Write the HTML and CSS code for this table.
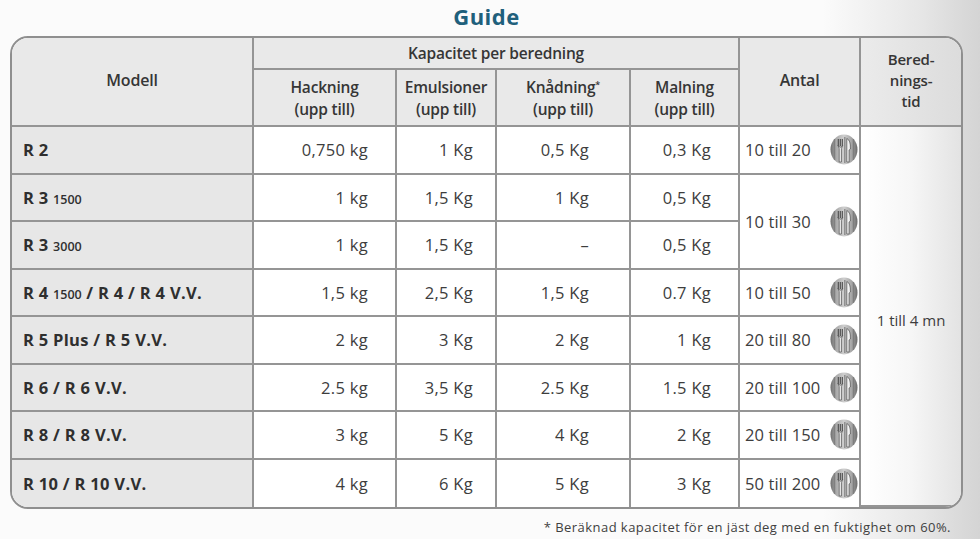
FILE: index.html
```html
<!DOCTYPE html>
<html lang="sv">
<head>
<meta charset="utf-8">
<title>Guide</title>
<link rel="stylesheet" href="styles.css">
</head>
<body>
<svg width="0" height="0" class="defs" aria-hidden="true">
  <defs>
    <linearGradient id="plate" x1="0" x2="1" y1="0" y2="0">
      <stop offset="0" stop-color="#6f6f6f"/>
      <stop offset="0.2" stop-color="#a9a9a9"/>
      <stop offset="0.5" stop-color="#cfcfcf"/>
      <stop offset="0.8" stop-color="#a3a3a3"/>
      <stop offset="1" stop-color="#6c6c6c"/>
    </linearGradient>
    <symbol id="cutlery" viewBox="0 0 28 31">
      <ellipse cx="14" cy="15.5" rx="13.5" ry="15" fill="url(#plate)"/>
      <path d="M4.5 5 V26 M23.5 5 V26 M14.8 3 V29" stroke="#777" stroke-width="1.4" opacity="0.75"/>
      <path d="M8.3 5 V12 M10.3 5 V12 M12.3 5 V12" stroke="#4a4a4a" stroke-width="1.1"/>
      <path d="M8 11.5 Q10.3 15 12.6 11.5 L11.4 14.5 V28 H9.2 V14.5 Z" fill="#f3f3f3" stroke="#4a4a4a" stroke-width="0.7"/>
      <path d="M16.8 28 V4.5 Q20.8 6 20.4 15 L19.1 16 V28 Z" fill="#f3f3f3" stroke="#4a4a4a" stroke-width="0.7"/>
    </symbol>
  </defs>
</svg>
<div class="page">
  <h1 class="title">Guide</h1>
  <div class="frame">
    <table class="guide">
      <colgroup>
        <col class="c-model">
        <col class="c-hack">
        <col class="c-emul">
        <col class="c-knad">
        <col class="c-maln">
        <col class="c-antal">
        <col class="c-tid">
      </colgroup>
      <thead>
        <tr class="hrow1">
          <th rowspan="2" class="model-h">Modell</th>
          <th colspan="4">Kapacitet per beredning</th>
          <th rowspan="2" class="antal-h">Antal</th>
          <th rowspan="2" class="last tid-h">Bered-<br>nings-<br>tid</th>
        </tr>
        <tr class="hrow2">
          <th>Hackning<br>(upp till)</th>
          <th>Emulsioner<br>(upp till)</th>
          <th>Knådning<sup>*</sup><br>(upp till)</th>
          <th>Malning<br>(upp till)</th>
        </tr>
      </thead>
      <tbody>
        <tr>
          <td class="model">R 2</td>
          <td class="num hack">0,750 kg</td>
          <td class="num emul">1 Kg</td>
          <td class="num knad">0,5 Kg</td>
          <td class="num maln">0,3 Kg</td>
          <td class="antal"><div class="antal-in"><span>10 till 20</span><svg class="ico"><use href="#cutlery"/></svg></div></td>
          <td rowspan="8" class="last tid">1 till 4 mn</td>
        </tr>
        <tr>
          <td class="model">R 3 <small>1500</small></td>
          <td class="num hack">1 kg</td>
          <td class="num emul">1,5 Kg</td>
          <td class="num knad">1 Kg</td>
          <td class="num maln">0,5 Kg</td>
          <td rowspan="2" class="antal"><div class="antal-in"><span>10 till 30</span><svg class="ico"><use href="#cutlery"/></svg></div></td>
        </tr>
        <tr>
          <td class="model">R 3 <small>3000</small></td>
          <td class="num hack">1 kg</td>
          <td class="num emul">1,5 Kg</td>
          <td class="num knad">–</td>
          <td class="num maln">0,5 Kg</td>
        </tr>
        <tr>
          <td class="model">R 4 <small>1500</small> / R 4 / R 4 V.V.</td>
          <td class="num hack">1,5 kg</td>
          <td class="num emul">2,5 Kg</td>
          <td class="num knad">1,5 Kg</td>
          <td class="num maln">0.7 Kg</td>
          <td class="antal"><div class="antal-in"><span>10 till 50</span><svg class="ico"><use href="#cutlery"/></svg></div></td>
        </tr>
        <tr>
          <td class="model">R 5 Plus / R 5 V.V.</td>
          <td class="num hack">2 kg</td>
          <td class="num emul">3 Kg</td>
          <td class="num knad">2 Kg</td>
          <td class="num maln">1 Kg</td>
          <td class="antal"><div class="antal-in"><span>20 till 80</span><svg class="ico"><use href="#cutlery"/></svg></div></td>
        </tr>
        <tr>
          <td class="model">R 6 / R 6 V.V.</td>
          <td class="num hack">2.5 kg</td>
          <td class="num emul">3,5 Kg</td>
          <td class="num knad">2.5 Kg</td>
          <td class="num maln">1.5 Kg</td>
          <td class="antal"><div class="antal-in"><span>20 till 100</span><svg class="ico"><use href="#cutlery"/></svg></div></td>
        </tr>
        <tr>
          <td class="model">R 8 / R 8 V.V.</td>
          <td class="num hack">3 kg</td>
          <td class="num emul">5 Kg</td>
          <td class="num knad">4 Kg</td>
          <td class="num maln">2 Kg</td>
          <td class="antal"><div class="antal-in"><span>20 till 150</span><svg class="ico"><use href="#cutlery"/></svg></div></td>
        </tr>
        <tr class="lastrow">
          <td class="model">R 10 / R 10 V.V.</td>
          <td class="num hack">4 kg</td>
          <td class="num emul">6 Kg</td>
          <td class="num knad">5 Kg</td>
          <td class="num maln">3 Kg</td>
          <td class="antal"><div class="antal-in"><span>50 till 200</span><svg class="ico"><use href="#cutlery"/></svg></div></td>
        </tr>
      </tbody>
    </table>
  </div>
  <p class="note">* Beräknad kapacitet för en jäst deg med en fuktighet om 60%.</p>
</div>
</body>
</html>
```

FILE: styles.css
```css
html, body {
  margin: 0;
  padding: 0;
}
body {
  width: 980px;
  height: 539px;
  overflow: hidden;
  font-family: "Open Sans", "DejaVu Sans", sans-serif;
  color: #3a3a3a;
  background: linear-gradient(to right, #fbfbfb 0%, #fbfbfb 84%, #e6e6e6 94%, #d4d4d4 100%);
}
.defs {
  position: absolute;
  width: 0;
  height: 0;
}
.page {
  padding-left: 10px;
  width: 953px;
}
.title {
  margin: 0;
  height: 36px;
  line-height: 32px;
  text-align: center;
  font-size: 22px;
  font-weight: 700;
  color: #1f607c;
  letter-spacing: 0.5px;
}
.frame {
  border: 2px solid #8f8f8f;
  border-radius: 18px;
  overflow: hidden;
  background: #fff;
}
.guide {
  width: 949px;
  table-layout: fixed;
  border-collapse: separate;
  border-spacing: 0;
}
.c-model { width: 242px; }
.c-hack { width: 143px; }
.c-emul { width: 100px; }
.c-knad { width: 134px; }
.c-maln { width: 109px; }
.c-antal { width: 121px; }
.c-tid { width: 100px; }

.guide th,
.guide td {
  box-sizing: border-box;
  border-right: 2px solid #959595;
  border-bottom: 2px solid #959595;
  padding: 0;
}
.guide .last {
  border-right: none;
}
.guide .lastrow td {
  border-bottom: none;
}
.guide th {
  background: #e9e9e9;
  font-size: 15.5px;
  font-weight: 600;
  color: #363636;
  line-height: 21.5px;
  text-align: center;
  letter-spacing: -0.2px;
}
.guide th.model-h,
.guide th.antal-h {
  font-size: 16px;
  padding-bottom: 2px;
}
.hrow1 {
  height: 32px;
}
.hrow1 th {
  padding-top: 1px;
}
.hrow2 {
  height: 57px;
}
.hrow2 th {
  padding-top: 2px;
}
.guide th sup {
  font-size: 9px;
  vertical-align: 5px;
  line-height: 0;
}
.guide th.tid-h {
  font-size: 15px;
  line-height: 21px;
  padding-bottom: 4px;
  background: linear-gradient(to right, #ebebeb, #dcdcdc);
}
.guide tbody tr {
  height: 47.5px;
}
.guide td {
  font-size: 16.5px;
  color: #3d3d3d;
  background: #fff;
}
.guide td.model {
  background: #e7e7e7;
  font-weight: 700;
  font-size: 16.5px;
  color: #2f2f2f;
  padding-left: 11px;
  letter-spacing: 0.3px;
}
.model small {
  font-size: 12.5px;
  font-weight: 600;
  letter-spacing: 0;
}
.num {
  text-align: right;
  letter-spacing: 0.3px;
}
.hack { padding-right: 27px !important; }
.emul { padding-right: 22px !important; }
.knad { padding-right: 40px !important; }
.maln { padding-right: 27px !important; }

.antal-in {
  display: flex;
  align-items: center;
  justify-content: space-between;
  padding: 0 1px 0 5px;
  letter-spacing: 0.1px;
}
.ico {
  width: 28px;
  height: 31px;
  flex: none;
}
.guide td.tid {
  text-align: center;
  font-size: 15px;
  padding-top: 8px;
  background: linear-gradient(to right, #ffffff 0%, #f6f6f6 50%, #e3e3e3 100%);
}
.note {
  margin: 9px 12px 0 0;
  text-align: right;
  font-size: 13px;
  line-height: 18px;
  letter-spacing: 0.45px;
  color: #404040;
}
```
